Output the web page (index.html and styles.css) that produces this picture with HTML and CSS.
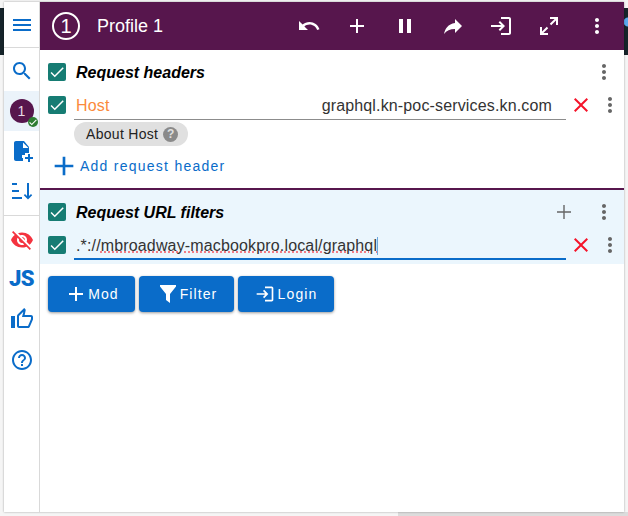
FILE: index.html
```html
<!DOCTYPE html>
<html lang="en">
<head>
  <meta charset="UTF-8">
  <meta name="viewport" content="width=device-width, initial-scale=1.0">
  <title>Profile 1</title>
  <link rel="stylesheet" href="styles.css">
</head>
<body>
  <div class="popup">
    <nav class="sidebar">
      <div class="side-top">
        <svg class="icon-24 blue" viewBox="0 0 24 24"><path d="M3 18h18v-2H3v2zm0-5h18v-2H3v2zm0-7v2h18V6H3z"/></svg>
      </div>
      <div class="side-group">
        <div class="side-item">
          <svg class="icon-24 blue" viewBox="0 0 24 24"><path d="M15.5 14h-.79l-.28-.27C15.41 12.59 16 11.11 16 9.5 16 5.91 13.09 3 9.5 3S3 5.91 3 9.5 5.91 16 9.5 16c1.61 0 3.09-.59 4.23-1.57l.27.28v.79l5 4.99L20.49 19l-4.99-5zm-6 0C7.01 14 5 11.99 5 9.5S7.01 5 9.5 5 14 7.01 14 9.5 11.99 14 9.5 14z"/></svg>
        </div>
        <div class="side-item side-active">
          <div class="avatar">1<span class="avatar-badge"><svg viewBox="0 0 24 24"><path d="M9 16.2 4.8 12l-1.8 1.8 6 6 12-12L19.2 6z"/></svg></span></div>
        </div>
        <div class="side-item">
          <svg class="icon-24 blue" viewBox="0 0 24 24"><path d="M14 2H6c-1.1 0-2 .9-2 2v16c0 1.1.9 2 2 2h7v-3h-1v-3h3v-2h4V8l-5-6zm-1 7V3.5L18.5 9H13z"/><path d="M18 15h2v3h3v2h-3v3h-2v-3h-3v-2h3z"/></svg>
        </div>
        <div class="side-item">
          <svg class="icon-24 blue" viewBox="0 0 24 24"><path d="M2 4h5v2H2zM2 11h7v2H2zM2 18h10v2H2zM17 4h2v13l2-2 1.200 1.200L18 20.400l-4.200-4.200L15 15l2 2z"/></svg>
        </div>
      </div>
      <div class="side-group side-sep">
        <div class="side-item">
          <svg class="icon-24 red" viewBox="0 0 24 24"><path d="M12 7c2.760 0 5 2.240 5 5 0 .65-.13 1.260-.36 1.830l2.920 2.920c1.510-1.260 2.700-2.890 3.430-4.750-1.730-4.390-6-7.500-11-7.500-1.400 0-2.740.25-3.980.7l2.160 2.160C10.740 7.130 11.350 7 12 7zM2 4.270l2.280 2.280.46.46C3.080 8.300 1.780 10.020 1 12c1.730 4.390 6 7.500 11 7.500 1.550 0 3.030-.3 4.380-.84l.42.42L19.730 22 21 20.730 3.270 3 2 4.270zM7.530 9.800l1.550 1.550c-.05.21-.08.43-.08.65 0 1.660 1.340 3 3 3 .22 0 .44-.03.65-.08l1.550 1.550c-.67.33-1.410.53-2.200.53-2.760 0-5-2.240-5-5 0-.79.2-1.530.53-2.200zm4.310-.78 3.150 3.150.02-.16c0-1.660-1.340-3-3-3l-.17.01z"/></svg>
        </div>
        <div class="side-item side-js">JS</div>
        <div class="side-item side-thumb">
          <svg class="icon-24 blue" viewBox="0 0 24 24"><path d="M9 21h9c.83 0 1.540-.5 1.840-1.220l3.020-7.050c.09-.23.14-.47.14-.73v-2c0-1.100-.9-2-2-2h-6.310l.95-4.570.03-.32c0-.41-.17-.79-.44-1.060L14.170 1 7.580 7.590C7.220 7.950 7 8.450 7 9v10c0 1.100.9 2 2 2zM9 9l4.340-4.340L12 10h9v2l-3 7H9V9zM1 9h4v12H1z"/></svg>
        </div>
        <div class="side-item">
          <svg class="icon-24 blue" viewBox="0 0 24 24"><path d="M11 18h2v-2h-2v2zm1-16C6.480 2 2 6.480 2 12s4.480 10 10 10 10-4.480 10-10S17.520 2 12 2zm0 18c-4.410 0-8-3.590-8-8s3.590-8 8-8 8 3.590 8 8-3.590 8-8 8zm0-14c-2.210 0-4 1.790-4 4h2c0-1.100.9-2 2-2s2 .9 2 2c0 2-3 1.750-3 5h2c0-2.250 3-2.500 3-5 0-2.210-1.790-4-4-4z"/></svg>
        </div>
      </div>
    </nav>

    <main class="content">
      <header class="topbar">
        <div class="profile-num">1</div>
        <div class="profile-name">Profile 1</div>
        <div class="top-actions">
          <svg class="icon-24" viewBox="0 0 24 24"><path d="M12.500 8c-2.650 0-5.050.99-6.900 2.600L2 7v9h9l-3.620-3.620c1.390-1.160 3.160-1.880 5.120-1.880 3.540 0 6.550 2.310 7.600 5.500l2.370-.78C21.080 11.030 17.150 8 12.500 8z"/></svg>
          <svg class="icon-24" viewBox="0 0 24 24"><path d="M19 13h-6v6h-2v-6H5v-2h6V5h2v6h6v2z"/></svg>
          <svg class="icon-24" viewBox="0 0 24 24"><path d="M6 19h4V5H6v14zm8-14v14h4V5h-4z"/></svg>
          <svg class="icon-24" viewBox="0 0 24 24"><path d="M14 9V5l7 7-7 7v-4.100c-5 0-8.500 1.600-11 5.100 1-5 4-10 11-11z"/></svg>
          <svg class="icon-24" viewBox="0 0 24 24"><path d="M11 7 9.600 8.400l2.600 2.600H2v2h10.200l-2.600 2.600L11 17l5-5-5-5zm9 12h-8v2h8c1.100 0 2-.9 2-2V5c0-1.100-.9-2-2-2h-8v2h8v14z"/></svg>
          <svg class="icon-24" viewBox="0 0 24 24"><path d="M13 3h8v8h-2V6.410l-4.800 4.800-1.400-1.400L17.590 5H13zM11 21H3v-8h2v4.590l4.800-4.800 1.400 1.400L6.410 19H11z"/></svg>
          <svg class="icon-24" viewBox="0 0 24 24"><path d="M12 8c1.100 0 2-.9 2-2s-.9-2-2-2-2 .9-2 2 .9 2 2 2zm0 2c-1.100 0-2 .9-2 2s.9 2 2 2 2-.9 2-2-.9-2-2-2zm0 6c-1.100 0-2 .9-2 2s.9 2 2 2 2-.9 2-2-.9-2-2-2z"/></svg>
        </div>
      </header>

      <section class="section section-headers">
        <div class="title-row">
          <span class="check"><svg viewBox="0 0 24 24"><path d="M9 16.200 4.800 12l-1.400 1.400L9 19 21 7l-1.400-1.400z"/></svg></span>
          <span class="section-title">Request headers</span>
          <svg class="icon-24 grey row-end" viewBox="0 0 24 24"><path d="M12 8c1.100 0 2-.9 2-2s-.9-2-2-2-2 .9-2 2 .9 2 2 2zm0 2c-1.100 0-2 .9-2 2s.9 2 2 2 2-.9 2-2-.9-2-2-2zm0 6c-1.100 0-2 .9-2 2s.9 2 2 2 2-.9 2-2-.9-2-2-2z"/></svg>
        </div>
        <div class="field-row">
          <span class="check"><svg viewBox="0 0 24 24"><path d="M9 16.200 4.800 12l-1.400 1.400L9 19 21 7l-1.400-1.400z"/></svg></span>
          <div class="field">
            <span class="header-name">Host</span>
            <span class="header-value">graphql.kn-poc-services.kn.com</span>
          </div>
          <svg class="icon-24 close" viewBox="0 0 24 24"><path d="M19 6.410 17.590 5 12 10.590 6.410 5 5 6.410 10.590 12 5 17.590 6.410 19 12 13.410 17.590 19 19 17.590 13.410 12z"/></svg>
          <svg class="icon-24 grey more" viewBox="0 0 24 24"><path d="M12 8c1.100 0 2-.9 2-2s-.9-2-2-2-2 .9-2 2 .9 2 2 2zm0 2c-1.100 0-2 .9-2 2s.9 2 2 2 2-.9 2-2-.9-2-2-2zm0 6c-1.100 0-2 .9-2 2s.9 2 2 2 2-.9 2-2-.9-2-2-2z"/></svg>
        </div>
        <div class="chip">About Host <span class="chip-help">?</span></div>
        <div class="add-link">
          <svg class="icon-32 blue" viewBox="0 0 24 24"><path d="M19 13h-6v6h-2v-6H5v-2h6V5h2v6h6v2z"/></svg>
          <span>Add request header</span>
        </div>
      </section>

      <section class="section section-filters">
        <div class="title-row">
          <span class="check"><svg viewBox="0 0 24 24"><path d="M9 16.200 4.800 12l-1.400 1.400L9 19 21 7l-1.400-1.400z"/></svg></span>
          <span class="section-title">Request URL filters</span>
          <svg class="icon-24 grey row-plus" viewBox="0 0 24 24"><path d="M19 12.700h-6.300V19h-1.400v-6.300H5v-1.400h6.300V5h1.400v6.300H19z"/></svg>
          <svg class="icon-24 grey row-end" viewBox="0 0 24 24"><path d="M12 8c1.100 0 2-.9 2-2s-.9-2-2-2-2 .9-2 2 .9 2 2 2zm0 2c-1.100 0-2 .9-2 2s.9 2 2 2 2-.9 2-2-.9-2-2-2zm0 6c-1.100 0-2 .9-2 2s.9 2 2 2 2-.9 2-2-.9-2-2-2z"/></svg>
        </div>
        <div class="field-row">
          <span class="check"><svg viewBox="0 0 24 24"><path d="M9 16.200 4.800 12l-1.400 1.400L9 19 21 7l-1.400-1.400z"/></svg></span>
          <div class="field field-focus">
            <span class="url-text">.*://<span class="misspelled">mbroadway-macbookpro.local/graphql</span></span><span class="caret"></span>
          </div>
          <svg class="icon-24 close" viewBox="0 0 24 24"><path d="M19 6.410 17.590 5 12 10.590 6.410 5 5 6.410 10.590 12 5 17.590 6.410 19 12 13.410 17.590 19 19 17.590 13.410 12z"/></svg>
          <svg class="icon-24 grey more" viewBox="0 0 24 24"><path d="M12 8c1.100 0 2-.9 2-2s-.9-2-2-2-2 .9-2 2 .9 2 2 2zm0 2c-1.100 0-2 .9-2 2s.9 2 2 2 2-.9 2-2-.9-2-2-2zm0 6c-1.100 0-2 .9-2 2s.9 2 2 2 2-.9 2-2-.9-2-2-2z"/></svg>
        </div>
      </section>

      <div class="buttons">
        <button class="btn btn-mod"><svg viewBox="0 0 24 24"><path d="M19 13h-6v6h-2v-6H5v-2h6V5h2v6h6v2z"/></svg>Mod</button>
        <button class="btn btn-filter"><svg viewBox="0 0 24 24"><path d="M4 3h16v1.500L14 12v9l-4-3v-6L4 4.500z"/></svg>Filter</button>
        <button class="btn btn-login"><svg class="icon-20" viewBox="0 0 24 24"><path d="M11 7 9.600 8.400l2.600 2.600H2v2h10.200l-2.600 2.600L11 17l5-5-5-5zm9 12h-8v2h8c1.100 0 2-.9 2-2V5c0-1.100-.9-2-2-2h-8v2h8v14z"/></svg>Login</button>
      </div>
    </main>
  </div>
</body>
</html>
```

FILE: styles.css
```css
html, body {
  height: 100%;
}
body {
  margin: 0;
  padding: 2px 4px 4px 4px;
  box-sizing: border-box;
  /* the window behind the popup shows at the edges */
  background:
    radial-gradient(circle at 628px 22px, #5aa9ee 4px, transparent 5px),
    linear-gradient(#16242a, #16242a) 0 8px / 100% 47px no-repeat,
    linear-gradient(#dcdcdc, #dcdcdc) 398px 100% / 100% 4px no-repeat,
    #f5f5f5;
  font-family: "Liberation Sans", Arial, sans-serif;
  color: #222;
  overflow: hidden;
}
svg {
  fill: currentColor;
  display: block;
  flex: none;
}

.popup {
  display: flex;
  height: 100%;
  background-color: #fff;
  box-shadow: 0 0 2px rgba(0, 0, 0, 0.35);
}

.icon-24 { width: 24px; height: 24px; }
.icon-32 { width: 32px; height: 32px; }
.blue { color: #0a6cc9; }
.red { color: #f4333f; }
.grey { color: #666; }

/* left bar */
.sidebar {
  width: 35px;
  flex: none;
  border-right: 1px solid #d9d9d9;
}
.side-top {
  height: 45px;
  display: flex;
  align-items: center;
  justify-content: center;
  border-bottom: 1px solid #d9d9d9;
}
.side-group {
  padding-top: 3px;
}
.side-sep {
  border-top: 1px solid #d9d9d9;
  margin-top: 4px;
  padding-top: 4px;
}
.side-item {
  height: 40px;
  display: flex;
  align-items: center;
  justify-content: center;
}
.side-active {
  background-color: #ebf3fa;
}
.avatar {
  position: relative;
  width: 24px;
  height: 24px;
  border-radius: 50%;
  background-color: #57164d;
  color: #e8dce6;
  font-size: 14px;
  line-height: 24px;
  text-align: center;
}
.avatar-badge {
  position: absolute;
  right: -4px;
  bottom: -4px;
  width: 10px;
  height: 10px;
  border-radius: 50%;
  background-color: #2e7d32;
  color: #fff;
}
.side-js {
  box-sizing: border-box;
  padding-bottom: 4px;
  font-family: "Roboto", sans-serif;
  font-weight: 900;
  font-size: 22px;
  letter-spacing: -0.5px;
  color: #0a6cc9;
}
.side-thumb {
  box-sizing: border-box;
  padding-bottom: 3px;
}

/* main column */
.content {
  flex: 1;
  min-width: 0;
}
.topbar {
  height: 48px;
  display: flex;
  align-items: center;
  background-color: #57164d;
  color: #fff;
  padding-left: 12px;
}
.profile-num {
  width: 24px;
  height: 24px;
  border: 2px solid #fff;
  border-radius: 50%;
  font-size: 20px;
  line-height: 24px;
  text-align: center;
}
.profile-name {
  margin-left: 17px;
  font-size: 18px;
}
.top-actions {
  margin-left: auto;
  display: flex;
  gap: 24px;
  padding-right: 15px;
}
.section {
  padding: 0 2px 0 8px;
}
.section-headers {
  height: 140px;
  box-sizing: border-box;
  border-bottom: 2px solid #57164d;
}
.section-filters {
  background-color: #ebf6fd;
  height: 74px;
}
.title-row {
  display: flex;
  align-items: center;
  height: 44px;
}
.check {
  width: 18px;
  height: 18px;
  border-radius: 2px;
  background-color: #167c73;
  color: #fff;
  flex: none;
}
.section-title {
  margin-left: 10px;
  padding-top: 2px;
  font-size: 16px;
  font-weight: bold;
  font-style: italic;
  color: #000;
}
.row-end {
  margin-left: auto;
  margin-right: 6px;
}
.row-plus {
  margin-left: auto;
  margin-right: 16px;
}
.row-plus + .row-end {
  margin-left: 0;
}
.field-row {
  display: flex;
  align-items: flex-start;
  height: 26px;
}
.field-row .check {
  margin-top: 2px;
}
.field {
  flex: 1;
  min-width: 0;
  box-sizing: border-box;
  margin-left: 8px;
  height: 26px;
  display: flex;
  justify-content: space-between;
  padding: 0 14px 0 2px;
  border-bottom: 1px solid #8c8c8c;
  font-size: 16px;
  letter-spacing: 0.15px;
  line-height: 24px;
}
.field-focus {
  justify-content: flex-start;
  border-bottom: 2px solid #0a6cc9;
}
.header-name {
  color: #fb8a3c;
}
.header-value {
  color: #333;
}
.url-text {
  color: #333;
}
.misspelled {
  text-decoration: underline dotted #f4555f;
}
.caret {
  width: 1px;
  height: 18px;
  margin-top: 3px;
  background-color: #6da7dc;
}
.close {
  margin: -1px 0 0 3px;
  color: #f5142a;
}
.more {
  margin: -1px 0 0 5px;
}

.chip {
  display: inline-flex;
  align-items: center;
  gap: 5px;
  height: 24px;
  margin-left: 26px;
  margin-top: 2px;
  padding: 0 10px 0 12px;
  border-radius: 12px;
  background-color: #e0e0e0;
  font-size: 14px;
  letter-spacing: 0.3px;
  color: #222;
}
.chip-help {
  width: 15px;
  height: 15px;
  border-radius: 50%;
  background-color: #8a8a8a;
  color: #e0e0e0;
  font-size: 12px;
  font-weight: bold;
  line-height: 15px;
  text-align: center;
  letter-spacing: 0;
}
.add-link {
  display: flex;
  align-items: center;
  margin-top: 4px;
  color: #0a6cc9;
  font-size: 14px;
  letter-spacing: 1.25px;
}

.buttons {
  display: flex;
  gap: 4px;
  padding: 12px 8px;
}
.btn {
  display: flex;
  align-items: center;
  justify-content: center;
  height: 36px;
  padding: 0;
  border: none;
  border-radius: 4px;
  background-color: #0a6cc9;
  color: #fff;
  font-family: "Liberation Sans", Arial, sans-serif;
  font-size: 14px;
  letter-spacing: 1.1px;
  box-shadow: 0 1px 3px rgba(0, 0, 0, 0.4);
}
.btn svg {
  width: 24px;
  height: 24px;
}
.btn .icon-20 {
  width: 20px;
  height: 20px;
  margin-right: 3px;
}
.btn-mod { width: 87px; }
.btn-filter { width: 95px; }
.btn-login { width: 96px; }
```
